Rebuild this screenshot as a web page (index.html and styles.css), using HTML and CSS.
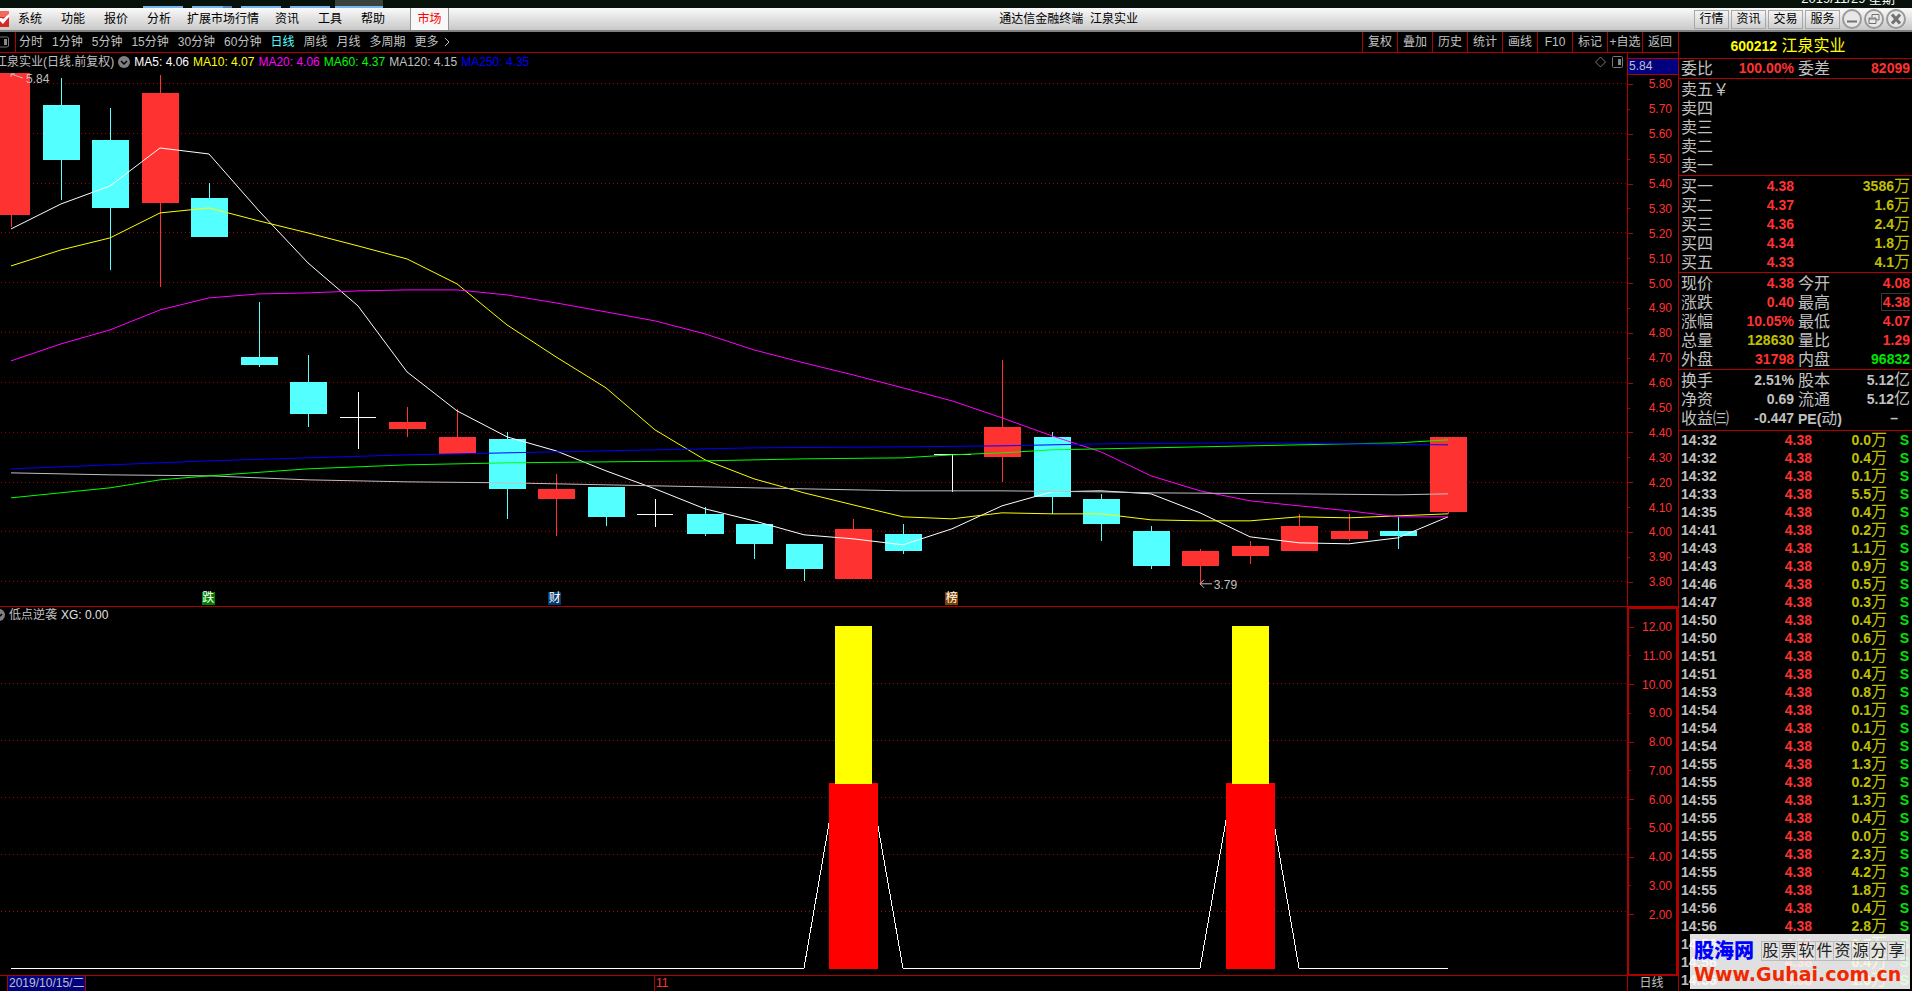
FILE: index.html
```html
<!DOCTYPE html>
<html lang="zh-CN">
<head>
<meta charset="utf-8">
<title>通达信金融终端 江泉实业</title>
<link rel="stylesheet" href="styles.css">
</head>
<body>
<div class="desktop">
  <span class="task task-1"></span><span class="task task-2"></span><span class="task task-3"></span><span class="task task-4"></span><span class="task task-5"></span>
  <span class="clock">2019/11/29 星期</span>
</div>
<header class="menubar">
  <svg class="logo" width="9" height="16" viewBox="0 0 9 16"><rect width="9" height="16" fill="#d42a26"/><rect width="9" height="6" fill="#f06a60"/><path d="M0 7h2l1 1 6-5v3L3 13 0 10z" fill="#fff"/></svg>
  <nav class="menu">
    <button>系统</button><button>功能</button><button>报价</button><button>分析</button><button class="wide">扩展市场行情</button><button>资讯</button><button>工具</button><button>帮助</button>
  </nav>
  <button class="market">市场</button>
  <h1 class="apptitle">通达信金融终端&nbsp; 江泉实业</h1>
  <div class="winbtns">
    <button class="box">行情</button><button class="box">资讯</button><button class="box">交易</button><button class="box">服务</button>
    <button class="round" aria-label="最小化"><svg width="20" height="20" viewBox="0 0 20 20"><circle cx="10" cy="10" r="9"/><path d="M5 12.500h10" stroke-width="2"/></svg></button>
    <button class="round" aria-label="还原"><svg width="20" height="20" viewBox="0 0 20 20"><circle cx="10" cy="10" r="9"/><path d="M8 8V5.500h7V11h-3M5 9h7v5.500H5zM5 10h7"/></svg></button>
    <button class="round" aria-label="关闭"><svg width="20" height="20" viewBox="0 0 20 20"><circle cx="10" cy="10" r="9"/><path d="M6 5.500l8 9M14 5.500l-8 9" stroke-width="3"/></svg></button>
  </div>
</header>
<div class="main">
<section class="charts">
  <div class="toolbar">
    <svg class="toggle" width="10" height="12" viewBox="0 0 10 12"><path d="M0 1h7.500l1 1v8l-1 1H0" fill="none" stroke="#777"/><path d="M4 3h3v6H4z" fill="#888"/></svg>
    <nav class="periods">
      <button>分时</button><button>1分钟</button><button>5分钟</button><button>15分钟</button><button>30分钟</button><button>60分钟</button><button class="on">日线</button><button>周线</button><button>月线</button><button>多周期</button><button class="more">更多<svg width="6" height="10" viewBox="0 0 6 10"><path d="M1 1l4 4-4 4" fill="none" stroke="#c0c0c0"/></svg></button>
    </nav>
    <nav class="tools">
      <button>复权</button><button>叠加</button><button>历史</button><button>统计</button><button>画线</button><button>F10</button><button>标记</button><button>+自选</button><button>返回</button>
    </nav>
  </div>

  <div class="panel price">
    <div class="plotcol">
      <div class="legend">
        <span class="name">江泉实业(日线.前复权)</span>
        <svg class="chev" width="12" height="12" viewBox="0 0 12 12"><circle cx="6" cy="6" r="6" fill="#808080"/><path d="M3 5l3 3 3-3" fill="none" stroke="#000" stroke-width="1.500"/></svg>
        <span class="white">MA5: 4.06</span><span class="yellow">MA10: 4.07</span><span class="magenta">MA20: 4.06</span><span class="lime">MA60: 4.37</span><span class="grey">MA120: 4.15</span><span class="blue">MA250: 4.35</span>
        <svg class="marks" width="28" height="12" viewBox="0 0 28 12"><path d="M5.500 1l5 5-5 5-5-5z" fill="none" stroke="#777"/><rect x="17.500" y=".5" width="10" height="11" rx="1" fill="none" stroke="#777"/><path d="M23 3h3v6h-3z" fill="#888"/></svg>
      </div>
      <div class="plot">
        <svg class="canvas" viewBox="0 73 1627 533" preserveAspectRatio="none">
          <path class="grid" d="M1 83.500H1627M1 133.500H1627M1 183.500H1627M1 232.500H1627M1 282.500H1627M1 332.500H1627M1 382.500H1627M1 432.500H1627M1 482.500H1627M1 531.500H1627M1 581.500H1627"/>
          <path fill="#ff3232" d="M-7 73h37v142h-37zM11 215h1v12h-1zM142 93h37v110h-37zM160 75h1v212h-1zM389 422h37v7h-37zM407 407h1v30h-1zM439 437h37v17h-37zM457 409h1v28h-1zM538 489h37v10h-37zM556 474h1v62h-1zM835 529h37v50h-37zM853 519h1v10h-1zM984 427h37v30h-37zM1002 360h1v122h-1zM1182 551h37v15h-37zM1200 549h1v36h-1zM1232 546h37v10h-37zM1250 541h1v23h-1zM1281 526h37v25h-37zM1299 514h1v12h-1zM1331 531h37v8h-37zM1349 514h1v27h-1zM1430 437h37v75h-37zM1448 512h1v2h-1z"/>
          <path fill="#54ffff" d="M43 105h37v55H43zM61 78h1v122h-1zM92 140h37v68H92zM110 108h1v162h-1zM191 198h37v39h-37zM209 183h1v15h-1zM241 357h37v8h-37zM259 302h1v65h-1zM290 382h37v32h-37zM308 355h1v72h-1zM489 439h37v50h-37zM507 432h1v87h-1zM588 487h37v30h-37zM606 517h1v9h-1zM687 514h37v20h-37zM705 507h1v29h-1zM736 524h37v20h-37zM754 544h1v15h-1zM786 544h37v25h-37zM804 569h1v12h-1zM885 534h37v17h-37zM903 524h1v30h-1zM1034 437h37v60h-37zM1052 432h1v82h-1zM1083 499h37v25h-37zM1101 494h1v47h-1zM1133 531h37v35h-37zM1151 526h1v43h-1zM1380 531h37v5h-37zM1398 517h1v32h-1z"/>
          <path fill="#fff" d="M358 392h1v57h-1zM340 417h36v1h-36zM655 499h1v28h-1zM637 514h36v1h-36zM952 454h1v38h-1zM934 454h37v1h-37z"/>
          <polyline class="line" stroke="#fff" points="11,229 61,204 110,186 160,148 209,154 259,211 308,263 358,306 407,372 457,411 507,437 556,451 606,471 655,489 705,509 754,521 804,535 853,539 903,545 952,529 1002,506 1052,492 1101,491 1151,494 1200,513 1250,537 1299,543 1349,544 1398,538 1448,517"/>
          <polyline class="line" stroke="#ff0" points="11,266 61,250 110,238 160,213 209,208 259,221 308,233 358,246 407,259 457,284 507,325 556,357 606,388 655,430 705,460 754,479 804,493 853,505 903,517 952,519 1002,513 1052,514 1101,514 1151,520 1200,521 1250,521 1299,517 1349,518 1398,516 1448,514"/>
          <polyline class="line" stroke="#f0f" points="11,361 61,344 110,330 160,310 209,298 259,294 308,293 358,291 407,290 457,290 507,295 556,303 606,312 655,321 705,334 754,350 804,363 853,375 903,388 952,401 1002,418 1052,436 1101,452 1151,476 1200,491 1250,501 1299,506 1349,511 1398,517 1448,517"/>
          <polyline class="line" stroke="#c0c0c0" points="11,473 110,475 209,476 308,480 407,482 507,483 606,485 705,487 804,489 903,491 1002,491 1101,492 1151,493 1299,494 1398,495 1448,494"/>
          <polyline class="line" stroke="#0f0" points="11,498 110,488 160,480 209,476 308,469 407,465 507,463 606,462 705,461 804,459 903,458 952,455 1002,453 1052,450 1101,449 1151,448 1200,447 1250,446 1299,445 1398,443 1448,440"/>
          <polyline class="line" stroke="#00f" points="11,469 110,465 209,461 308,458 407,455 507,453 606,451 754,448 903,447 1002,446 1101,444 1250,443 1349,444 1448,445"/>
          <path class="line" stroke="#c0c0c0" d="M23 78l-12-4M11 77v-3h4M1212 584h-11M1204 580l-4 4 4 4"/>
        </svg>
        <span class="note high">5.84</span>
        <span class="note low">3.79</span>
        <span class="tag fall">跌</span>
        <span class="tag fin">财</span>
        <span class="tag top">榜</span>
      </div>
    </div>
    <div class="axis">
      <div class="cursor">5.84</div>
      <ul class="scale">
        <li>5.80</li><li>5.70</li><li>5.60</li><li>5.50</li><li>5.40</li><li>5.30</li><li>5.20</li><li>5.10</li><li>5.00</li><li>4.90</li><li>4.80</li><li>4.70</li><li>4.60</li><li>4.50</li><li>4.40</li><li>4.30</li><li>4.20</li><li>4.10</li><li>4.00</li><li>3.90</li><li>3.80</li>
      </ul>
    </div>
  </div>

  <div class="panel signal">
    <div class="plotcol">
      <div class="legend sub">
        <svg class="chev" width="12" height="12" viewBox="0 0 12 12"><circle cx="6" cy="6" r="6" fill="#808080"/><path d="M3 5l3 3 3-3" fill="none" stroke="#000" stroke-width="1.500"/></svg>
        <span class="grey">低点逆袭</span><span class="pale">XG: 0.00</span>
      </div>
      <div class="plot">
        <svg class="canvas" viewBox="0 623 1627 352" preserveAspectRatio="none">
          <path class="grid" d="M1 683.500H1627M1 740.500H1627M1 797.500H1627M1 854.500H1627M1 911.500H1627"/>
          <polyline class="line" stroke="#fff" points="11,968 804,968 853,684 903,968 1200,968 1250,684 1299,968 1448,968"/>
          <path fill="#f00" d="M829 783h49v186h-49zM1226 783h49v186h-49z"/>
          <path fill="#ff0" d="M835 626h37v158h-37zM1232 626h37v158h-37z"/>
        </svg>
      </div>
    </div>
    <div class="axis framed">
      <ul class="scale">
        <li>12.00</li><li>11.00</li><li>10.00</li><li>9.00</li><li>8.00</li><li>7.00</li><li>6.00</li><li>5.00</li><li>4.00</li><li>3.00</li><li>2.00</li>
      </ul>
    </div>
  </div>

  <footer class="dates">
    <div class="track"><span class="date">2019/10/15/二</span><span class="month">11</span></div>
    <div class="period">日线</div>
  </footer>
</section>

<aside class="quote">
  <h2 class="stock"><b>600212</b> 江泉实业</h2>
  <table class="grp ratio"><colgroup><col class="c1"><col class="c2"><col class="c3"><col></colgroup>
    <tr><th>委比</th><td class="red">100.00%</td><th>委差</th><td class="red">82099</td></tr>
  </table>
  <table class="grp">
    <tr><th>卖五￥</th></tr><tr><th>卖四</th></tr><tr><th>卖三</th></tr><tr><th>卖二</th></tr><tr><th>卖一</th></tr>
  </table>
  <table class="grp"><colgroup><col class="c1"><col class="c2"><col></colgroup>
    <tr><th>买一</th><td class="red">4.38</td><td class="olive">3586<i>万</i></td></tr>
    <tr><th>买二</th><td class="red">4.37</td><td class="olive">1.6<i>万</i></td></tr>
    <tr><th>买三</th><td class="red">4.36</td><td class="olive">2.4<i>万</i></td></tr>
    <tr><th>买四</th><td class="red">4.34</td><td class="olive">1.8<i>万</i></td></tr>
    <tr><th>买五</th><td class="red">4.33</td><td class="olive">4.1<i>万</i></td></tr>
  </table>
  <table class="grp"><colgroup><col class="c1"><col class="c2"><col class="c3"><col></colgroup>
    <tr><th>现价</th><td class="red">4.38</td><th>今开</th><td class="red">4.08</td></tr>
    <tr><th>涨跌</th><td class="red">0.40</td><th>最高</th><td class="red"><span class="boxed">4.38</span></td></tr>
    <tr><th>涨幅</th><td class="red">10.05%</td><th>最低</th><td class="red">4.07</td></tr>
    <tr><th>总量</th><td class="olive">128630</td><th>量比</th><td class="red">1.29</td></tr>
    <tr><th>外盘</th><td class="red">31798</td><th>内盘</th><td class="green">96832</td></tr>
  </table>
  <table class="grp basic"><colgroup><col class="c1"><col class="c2"><col class="c3"><col></colgroup>
    <tr><th>换手</th><td>2.51%</td><th>股本</th><td>5.12<i>亿</i></td></tr>
    <tr><th>净资</th><td>0.69</td><th>流通</th><td>5.12<i>亿</i></td></tr>
    <tr><th>收益㈢</th><td>-0.447</td><th><b>PE(</b>动<b>)</b></th><td class="none">–</td></tr>
  </table>
  <table class="ticks"><colgroup><col class="t1"><col class="t2"><col class="t3"><col></colgroup>
    <tr><td>14:32</td><td>4.38</td><td>0.0<i>万</i></td><td>S</td></tr>
    <tr><td>14:32</td><td>4.38</td><td>0.4<i>万</i></td><td>S</td></tr>
    <tr><td>14:32</td><td>4.38</td><td>0.1<i>万</i></td><td>S</td></tr>
    <tr><td>14:33</td><td>4.38</td><td>5.5<i>万</i></td><td>S</td></tr>
    <tr><td>14:35</td><td>4.38</td><td>0.4<i>万</i></td><td>S</td></tr>
    <tr><td>14:41</td><td>4.38</td><td>0.2<i>万</i></td><td>S</td></tr>
    <tr><td>14:43</td><td>4.38</td><td>1.1<i>万</i></td><td>S</td></tr>
    <tr><td>14:43</td><td>4.38</td><td>0.9<i>万</i></td><td>S</td></tr>
    <tr><td>14:46</td><td>4.38</td><td>0.5<i>万</i></td><td>S</td></tr>
    <tr><td>14:47</td><td>4.38</td><td>0.3<i>万</i></td><td>S</td></tr>
    <tr><td>14:50</td><td>4.38</td><td>0.4<i>万</i></td><td>S</td></tr>
    <tr><td>14:50</td><td>4.38</td><td>0.6<i>万</i></td><td>S</td></tr>
    <tr><td>14:51</td><td>4.38</td><td>0.1<i>万</i></td><td>S</td></tr>
    <tr><td>14:51</td><td>4.38</td><td>0.4<i>万</i></td><td>S</td></tr>
    <tr><td>14:53</td><td>4.38</td><td>0.8<i>万</i></td><td>S</td></tr>
    <tr><td>14:54</td><td>4.38</td><td>0.1<i>万</i></td><td>S</td></tr>
    <tr><td>14:54</td><td>4.38</td><td>0.1<i>万</i></td><td>S</td></tr>
    <tr><td>14:54</td><td>4.38</td><td>0.4<i>万</i></td><td>S</td></tr>
    <tr><td>14:55</td><td>4.38</td><td>1.3<i>万</i></td><td>S</td></tr>
    <tr><td>14:55</td><td>4.38</td><td>0.2<i>万</i></td><td>S</td></tr>
    <tr><td>14:55</td><td>4.38</td><td>1.3<i>万</i></td><td>S</td></tr>
    <tr><td>14:55</td><td>4.38</td><td>0.4<i>万</i></td><td>S</td></tr>
    <tr><td>14:55</td><td>4.38</td><td>0.0<i>万</i></td><td>S</td></tr>
    <tr><td>14:55</td><td>4.38</td><td>2.3<i>万</i></td><td>S</td></tr>
    <tr><td>14:55</td><td>4.38</td><td>4.2<i>万</i></td><td>S</td></tr>
    <tr><td>14:55</td><td>4.38</td><td>1.8<i>万</i></td><td>S</td></tr>
    <tr><td>14:56</td><td>4.38</td><td>0.4<i>万</i></td><td>S</td></tr>
    <tr><td>14:56</td><td>4.38</td><td>2.8<i>万</i></td><td>S</td></tr>
    <tr><td>14:56</td><td>4.38</td><td>0.7<i>万</i></td><td>S</td></tr>
    <tr><td>14:56</td><td>4.38</td><td>0.4<i>万</i></td><td>S</td></tr>
    <tr><td>14:56</td><td>4.38</td><td>1.0<i>万</i></td><td>S</td></tr>
  </table>
  <div class="watermark">
    <div class="wm-top"><strong>股海网</strong><span class="slogan"><span>股</span><span>票</span><span>软</span><span>件</span><span>资</span><span>源</span><span>分</span><span>享</span></span></div>
    <div class="wm-url">Www.Guhai.com.cn</div>
  </div>
</aside>
</div>
</body>
</html>
```
FILE: styles.css
```css
* { box-sizing: border-box; }
body {
  margin: 0;
  height: 100vh;
  display: flex;
  flex-direction: column;
  overflow: hidden;
  background: #000;
  color: #c0c0c0;
  font: 12px/16px "Liberation Sans", "Noto Sans CJK SC", sans-serif;
  white-space: nowrap;
}
button {
  margin: 0;
  padding: 0;
  border: 0;
  background: none;
  color: inherit;
  font: inherit;
}
svg { display: block; flex: none; }
i { font-style: normal; font-weight: normal; font-size: 16px; line-height: 0; }

/* desktop strip above the window */
.desktop {
  display: flex;
  align-items: flex-end;
  flex: none;
  height: 8px;
  padding: 0 17px 0 143px;
  background: #07120a;
  overflow: hidden;
}
.task { flex: none; width: 40px; height: 2px; margin-right: 9px; background: #74b4f0; }
.task-2 { background: linear-gradient(90deg, #74b4f0 78%, #4f86c0 78%); }
.task-4 { margin-right: 5px; }
.task-5 { width: 48px; height: 8px; background: #3a423c; border-bottom: 2px solid #74b4f0; }
.clock { margin-left: auto; color: #fff; font-size: 13px; line-height: 16px; padding-bottom: 1px; }

/* menu bar */
.menubar {
  display: flex;
  align-items: center;
  flex: none;
  height: 24px;
  padding-right: 6px;
  background: linear-gradient(#fafafa, #c8c8c8);
  border-bottom: 2px solid #808080;
  color: #000;
}
.menu { display: flex; gap: 19px; margin: 0 25px 0 9px; }
.menu .wide { margin: 0 -3px; }
.market {
  align-self: stretch;
  width: 39px;
  border: solid #909090;
  border-width: 0 1px;
  background: #f8f8f8;
  color: #f00;
}
.apptitle { flex: 1; margin: 0; padding-right: 6px; font: inherit; text-align: center; }
.winbtns { display: flex; align-items: center; gap: 2px; }
.box {
  width: 35px;
  height: 19px;
  border: 1px solid #a8a8a8;
  background: linear-gradient(#f4f4f4, #cfcfcf);
}
.round svg { fill: #e8e8e8; stroke: #888; stroke-width: 1; }
.round circle { stroke-width: 2; stroke: #999; }
.round path { fill: none; stroke: #707070; }

.main { display: flex; flex: 1; min-height: 0; }
.charts { display: flex; flex-direction: column; flex: 1; min-width: 0; }

/* period and tool bar */
.toolbar { display: flex; flex: none; height: 21px; border-bottom: 1px solid #b00000; }
.toggle { align-self: center; margin-right: 5px; }
.periods { display: flex; gap: 9px; padding-left: 3px; border-left: 1px solid #b00000; }
.periods .on { color: #54ffff; }
.more { display: flex; align-items: center; gap: 5px; }
.tools { display: flex; margin-left: auto; padding-right: 1px; }
.tools button { width: 35px; border-left: 1px solid #b00000; }

/* chart panels */
.panel { display: flex; min-height: 0; }
.price { flex: 554; border-bottom: 1px solid #b00000; }
.signal { flex: 369; border-bottom: 1px solid #b00000; }
.plotcol { display: flex; flex-direction: column; flex: 1; min-width: 0; }
.legend { display: flex; align-items: center; gap: 4px; flex: none; height: 20px; padding: 0 4px 3px 0; overflow: hidden; }
.legend .name { margin-left: -5px; }
.legend .chev { margin: 0; }
.legend .marks { margin-left: auto; }
.legend.sub { height: 16px; padding-bottom: 0; }
.legend.sub .chev { margin: 0 0 0 -7px; }
.white { color: #fff; }
.yellow { color: #ff0; }
.magenta { color: #f0f; }
.lime { color: #0f0; }
.grey { color: #c0c0c0; }
.blue { color: #00f; }
.pale { color: #e0e0e0; }

.plot { position: relative; flex: 1; min-height: 0; }
.canvas { width: 100%; height: 100%; shape-rendering: crispEdges; }
.grid { fill: none; stroke: #b00000; stroke-dasharray: 1 3; }
.line { fill: none; stroke-width: 1; }
.note { position: absolute; line-height: 12px; }
.high { left: 1.6%; top: 0; }
.low { left: 74.6%; top: 95%; }
.tag { position: absolute; bottom: 1px; width: 13px; height: 13px; color: #fff; line-height: 13px; text-align: center; }
.fall { left: 12.4%; background: #008000; }
.fin { left: 33.7%; background: #003a70; }
.top { left: 58.1%; background: #804000; }

/* value axes */
.axis { display: flex; flex-direction: column; flex: none; width: 51px; padding: 5px 0 11px; border-left: 1px solid #b00000; }
.cursor { flex: none; height: 17px; padding-left: 1px; background: #000080; border: solid #b00000; border-width: 1px 0; line-height: 15px; }
.scale { display: flex; flex-direction: column; flex: 1; margin: -3px 0 0; padding: 0; list-style: none; color: #ff3232; }
.scale li { display: flex; align-items: center; justify-content: space-between; flex: 1; min-height: 0; padding-right: 6px; }
.scale li::before { content: ""; width: 5px; height: 1px; background: #b00000; }
.scale li:nth-child(even)::before { width: 2px; }
.framed { padding: 4px 0 45px; border: 2px solid #b00000; border-bottom-width: 1px; }
.framed .scale { margin: 0; }
.framed .scale li { padding-right: 4px; }

.dates { display: flex; flex: none; height: 15px; line-height: 15px; }
.track { position: relative; flex: 1; padding-left: 7px; }
.date { display: inline-block; height: 15px; padding: 0 1px; background: #000080; border: solid #b00000; border-width: 0 1px; }
.month { position: absolute; left: 40.2%; padding-left: 1px; border-left: 1px solid #b00000; color: #ff3232; }
.period { width: 51px; padding-right: 3px; border-left: 1px solid #b00000; text-align: center; }

/* quote column */
.quote { position: relative; flex: none; width: 234px; border-left: 1px solid #b00000; font-size: 14px; overflow: hidden; }
.stock { margin: 0; height: 27px; border-bottom: 1px solid #b00000; color: #ff0; font-size: 16px; font-weight: normal; line-height: 27px; text-align: center; padding-right: 15px; }
.stock b { font-size: 14px; }
table { width: 100%; border-collapse: separate; border-spacing: 0; table-layout: fixed; }
th, td { padding: 0; height: 19px; line-height: 19px; }
th { font-weight: normal; font-size: 16px; text-align: left; }
th b { font-size: 14px; line-height: 0; }
td { font-weight: bold; text-align: right; }
.grp { padding: 1px 2px 0 2px; border-bottom: 1px solid #b00000; }
.ratio { padding-top: 0; }
.basic { padding-bottom: 2px; }
.c1 { width: 50px; }
.c2 { width: 63px; }
.c3 { width: 52px; }
.grp th:nth-child(3) { padding-left: 4px; }
.red { color: #ff3232; }
.olive { color: #c0c000; }
.green { color: #00e600; }
.grp .none { padding-right: 12px; }
.boxed { display: inline-block; height: 18px; padding-left: 1px; line-height: 16px; border: 1px solid #383838; border-right: 0; vertical-align: top; }
.ticks { padding: 0 3px 0 2px; }
.ticks td { height: 18px; line-height: 18px; }
.t1 { width: 60px; }
.t2 { width: 71px; }
.t3 { width: 75px; }
.ticks td:nth-child(1) { text-align: left; }
.ticks td:nth-child(2) { color: #ff3232; }
.ticks td:nth-child(3) { color: #c0c000; }
.ticks td:nth-child(4) { color: #00e600; }

.watermark { position: absolute; right: 2px; bottom: 2px; width: 220px; height: 55px; padding: 5px 4px; background: rgba(255, 255, 255, .88); }
.wm-top { display: flex; align-items: center; justify-content: space-between; height: 24px; }
.wm-top strong { color: #00f; font-size: 20px; font-weight: 900; }
.slogan { display: flex; color: #222; font-size: 16px; line-height: 18px; border-left: 1px solid #bbb; }
.slogan span { width: 18px; border: solid #bbb; border-width: 1px 1px 1px 0; text-align: center; }
.wm-url { color: #f02800; font: bold 19px/22px "DejaVu Sans", sans-serif; }
```
